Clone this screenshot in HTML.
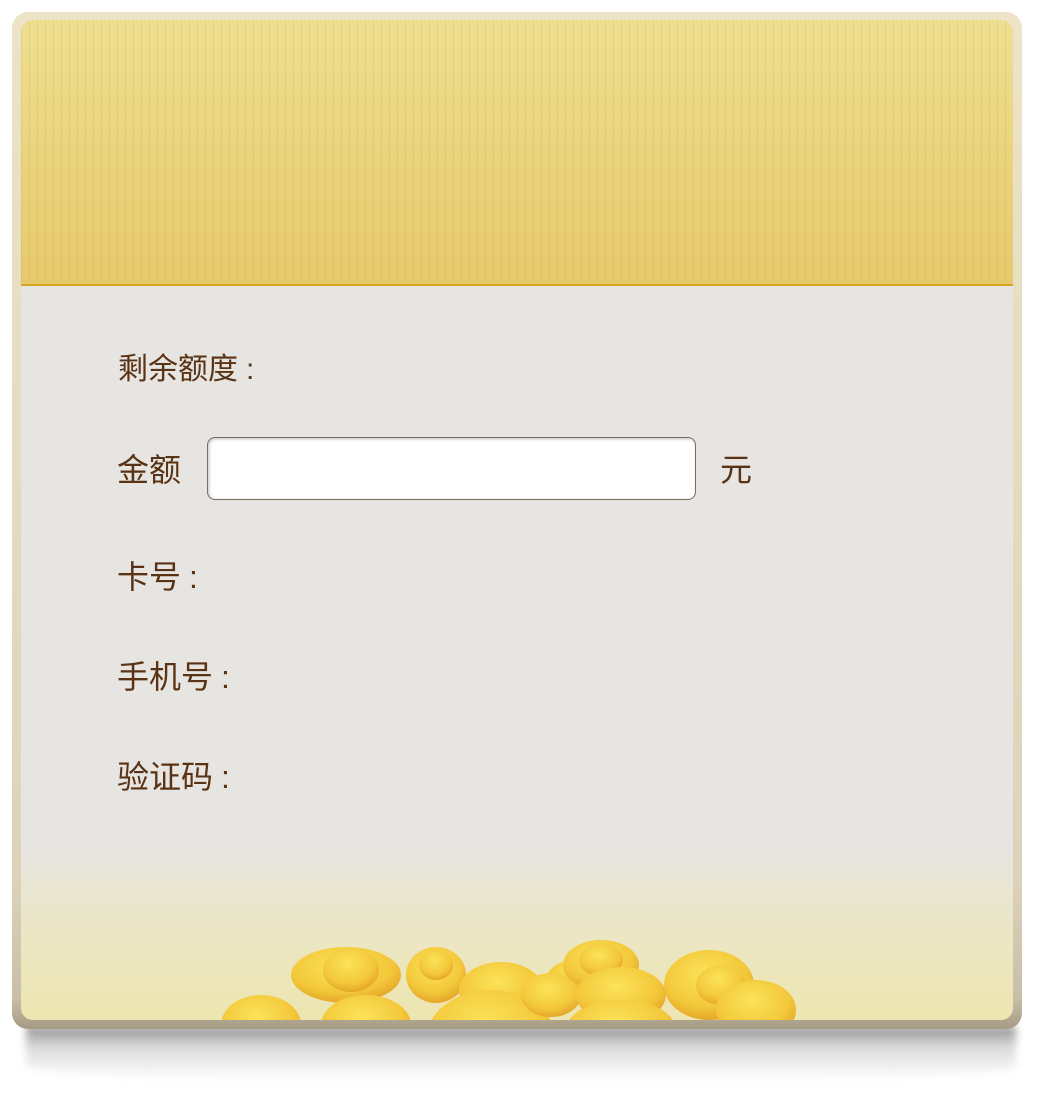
<!DOCTYPE html>
<html><head><meta charset="utf-8"><style>
body{margin:0;width:1040px;height:1097px;background:#fff;position:relative;overflow:hidden;font-family:"Liberation Sans","Noto Sans CJK SC",sans-serif}
.shadow{position:absolute;left:26px;top:1026px;width:990px;height:56px;background:linear-gradient(rgba(110,110,110,.75),rgba(160,160,160,.35) 40%,rgba(255,255,255,0));filter:blur(4px);border-radius:0 0 40% 40%/0 0 30% 30%;}
.frame{position:absolute;left:12px;top:12px;width:1010px;height:1017px;border-radius:16px;background:linear-gradient(#ede4c7,#dcd3ba 85%,#c9bfa8 97%,#a59b85);}
.panel{position:absolute;left:21px;top:20px;width:992px;height:1000px;border-radius:12px;overflow:hidden;background:linear-gradient(#e7e5e2 0,#e7e5e2 825px,#ebe6c8 900px,#ede6b0 1000px);}
.head{position:absolute;left:0;top:0;width:992px;height:264px;background:repeating-linear-gradient(90deg,rgba(180,150,60,.18) 0 1px,transparent 1px 8px),linear-gradient(#eedf90,#e7c96c);border-bottom:2px solid #d9a520;}
.l{position:absolute;color:#5a3214;font-size:30px;line-height:1;}
.c{margin-left:8px}
.inp{position:absolute;left:207px;top:437px;width:487px;height:61px;border:1px solid #7a6e5c;border-radius:8px;background:#fff;box-shadow:inset 1px 1px 3px rgba(0,0,0,.25);}
</style></head><body>
<div class="shadow"></div>
<div class="frame"></div>
<div class="panel"><div class="head"></div>
<svg style="position:absolute;left:0;top:880px" width="992" height="120">
<defs><radialGradient id="g" cx="45%" cy="35%" r="65%"><stop offset="0" stop-color="#fbe35a"/><stop offset=".7" stop-color="#f3c83a"/><stop offset="1" stop-color="#e5a72a"/></radialGradient></defs>
<g fill="url(#g)">
<ellipse cx="240" cy="125" rx="40" ry="30"/>
<ellipse cx="325" cy="75" rx="55" ry="28"/><ellipse cx="330" cy="70" rx="28" ry="22"/>
<ellipse cx="345" cy="125" rx="45" ry="30"/>
<ellipse cx="415" cy="75" rx="30" ry="28"/><ellipse cx="415" cy="65" rx="17" ry="15"/>
<ellipse cx="480" cy="90" rx="42" ry="28"/>
<ellipse cx="470" cy="140" rx="65" ry="50"/>
<ellipse cx="555" cy="80" rx="30" ry="20"/><ellipse cx="530" cy="95" rx="30" ry="22"/>
<ellipse cx="580" cy="65" rx="38" ry="25"/><ellipse cx="580" cy="60" rx="22" ry="16"/>
<ellipse cx="600" cy="95" rx="45" ry="28"/>
<ellipse cx="600" cy="130" rx="55" ry="30"/>
<ellipse cx="688" cy="85" rx="45" ry="35"/><ellipse cx="700" cy="85" rx="25" ry="20"/>
<ellipse cx="735" cy="110" rx="40" ry="30"/>
<ellipse cx="770" cy="140" rx="20" ry="15"/>
</g></svg>
</div>
<div class="l" style="left:118px;top:355px;">剩余额度<span class="c">:</span></div>
<div class="l" style="left:117px;top:454px;font-size:32px">金额</div>
<div class="inp"></div>
<div class="l" style="left:720px;top:454px;font-size:32px">元</div>
<div class="l" style="left:117px;top:561px;font-size:32px">卡号<span class="c">:</span></div>
<div class="l" style="left:117px;top:661px;font-size:32px">手机号<span class="c">:</span></div>
<div class="l" style="left:117px;top:761px;font-size:32px">验证码<span class="c">:</span></div>
</body></html>
